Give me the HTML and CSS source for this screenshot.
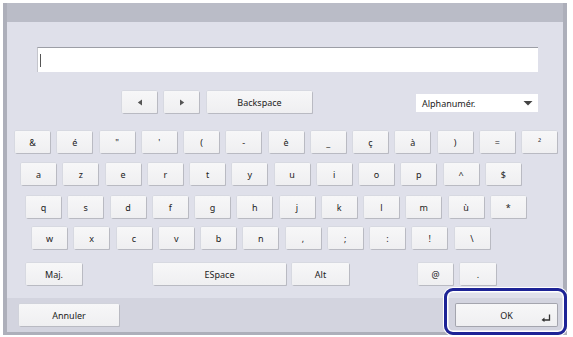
FILE: index.html
```
<!DOCTYPE html>
<html lang="fr">
<head>
<meta charset="UTF-8">
<meta name="viewport" content="width=device-width, initial-scale=1.0">
<title>Clavier</title>
<link rel="stylesheet" href="styles.css">
</head>
<body>

<div class="frame">
    <div class="title-bar"></div>

    <div class="panel">
        <div class="text-field"><span class="caret"></span></div>

        <div class="nav-row">
            <button class="key arrow-key"><svg width="6" height="7" viewBox="0 0 6 7"><path d="M5 0.5 L0.8 3.5 L5 6.5 Z" fill="#555"/></svg></button>
            <button class="key arrow-key"><svg width="6" height="7" viewBox="0 0 6 7"><path d="M1 0.5 L5.2 3.5 L1 6.5 Z" fill="#555"/></svg></button>
            <button class="key backspace-key">Backspace</button>
            <div class="mode-select">
                <span>Alphanumér.</span>
                <svg width="10" height="5" viewBox="0 0 10 5"><path d="M0.5 0 H9.5 L5 4.5 Z" fill="#444"/></svg>
            </div>
        </div>

        <div class="keyboard">
            <div class="key-row row-1">
                <button class="key">&amp;</button>
                <button class="key">é</button>
                <button class="key">"</button>
                <button class="key">'</button>
                <button class="key">(</button>
                <button class="key">-</button>
                <button class="key">è</button>
                <button class="key">_</button>
                <button class="key">ç</button>
                <button class="key">à</button>
                <button class="key">)</button>
                <button class="key">=</button>
                <button class="key">²</button>
            </div>
            <div class="key-row row-2">
                <button class="key">a</button>
                <button class="key">z</button>
                <button class="key">e</button>
                <button class="key">r</button>
                <button class="key">t</button>
                <button class="key">y</button>
                <button class="key">u</button>
                <button class="key">i</button>
                <button class="key">o</button>
                <button class="key">p</button>
                <button class="key">^</button>
                <button class="key">$</button>
            </div>
            <div class="key-row row-3">
                <button class="key">q</button>
                <button class="key">s</button>
                <button class="key">d</button>
                <button class="key">f</button>
                <button class="key">g</button>
                <button class="key">h</button>
                <button class="key">j</button>
                <button class="key">k</button>
                <button class="key">l</button>
                <button class="key">m</button>
                <button class="key">ù</button>
                <button class="key">*</button>
            </div>
            <div class="key-row row-4">
                <button class="key">w</button>
                <button class="key">x</button>
                <button class="key">c</button>
                <button class="key">v</button>
                <button class="key">b</button>
                <button class="key">n</button>
                <button class="key">,</button>
                <button class="key">;</button>
                <button class="key">:</button>
                <button class="key">!</button>
                <button class="key">\</button>
            </div>
            <div class="key-row row-5">
                <button class="key shift-key">Maj.</button>
                <button class="key space-key">ESpace</button>
                <button class="key alt-key">Alt</button>
                <button class="key at-key">@</button>
                <button class="key dot-key">.</button>
            </div>
        </div>
    </div>

    <div class="action-bar">
        <button class="key action-button">Annuler</button>
        <button class="key action-button ok-button">
            OK
            <svg class="enter-icon" width="10" height="8" viewBox="0 0 10 8"><path d="M8.5 0.5 V6 H3" stroke="#333" stroke-width="1.3" fill="none"/><path d="M0.5 6 L3.5 3.5 V8 Z" fill="#333"/></svg>
        </button>
    </div>
</div>

</body>
</html>
```

FILE: styles.css
```
body {
    margin: 0;
    background-color: #fff;
    font-family: "Noto Sans", "Open Sans", sans-serif;
    color: #222;
}
.frame {
    margin: 3px 0 0 3px;
    width: 564px;
    border-left: 4px solid #adafba;
    border-right: 4px solid #adafba;
    border-bottom: 3px solid #adafba;
    box-sizing: border-box;
}
.title-bar {
    height: 19px;
    background-color: #babcc7;
}
.panel {
    background-color: #dfe0ea;
    height: 276px;
    padding-top: 25px;
    box-sizing: border-box;
}
.text-field {
    margin-left: 30px;
    width: 501px;
    height: 25px;
    background-color: #fff;
    border-top: 1px solid #9c9ea6;
    border-left: 1px solid #c4c5cc;
    box-sizing: border-box;
    display: flex;
    align-items: center;
    padding-left: 2px;
}
.caret {
    width: 1px;
    height: 13px;
    background-color: #555;
}

/* Buttons */
.key {
    width: 35px;
    height: 22px;
    padding: 0;
    border: none;
    border-radius: 1px;
    background: linear-gradient(#f7f7f8, #efeff1);
    box-shadow: 1px 1px 0 #b9bac2, 0 0 0 0.5px #d0d1d8;
    font-family: inherit;
    font-size: 9px;
    color: #222;
    flex: none;
    cursor: pointer;
}
.nav-row {
    display: flex;
    margin-top: 19px;
    padding-left: 115px;
    padding-right: 25px;
}
.arrow-key {
    margin-right: 7px;
}
.arrow-key svg {
    display: block;
    margin: 0 auto;
}
.backspace-key {
    width: 105px;
    margin-left: 1px;
}
.mode-select {
    margin-left: auto;
    margin-top: 3px;
    width: 122px;
    height: 18px;
    background-color: #fff;
    display: flex;
    align-items: center;
    justify-content: space-between;
    padding: 0 5px 0 6px;
    box-sizing: border-box;
    font-size: 9px;
}

/* Keyboard */
.key-row {
    display: flex;
    gap: 7.25px;
}
.row-1 { margin-top: 18px; padding-left: 8px; }
.row-2 { margin-top: 10px; padding-left: 14px; }
.row-3 { margin-top: 11px; padding-left: 19px; }
.row-4 { margin-top: 9px; padding-left: 25px; }
.row-5 { margin-top: 14px; padding-left: 19px; gap: 0; }
.shift-key { width: 56px; }
.space-key { width: 133px; margin-left: 71px; }
.alt-key { width: 57px; margin-left: 6px; }
.at-key { margin-left: 69px; }
.dot-key { width: 36px; margin-left: 7px; }

/* Bottom bar */
.action-bar {
    height: 34px;
    background-color: #d3d4df;
    display: flex;
    justify-content: space-between;
    padding: 6px 6px 0 12px;
    box-sizing: border-box;
}
.action-button {
    width: 100px;
}
.ok-button {
    width: 101px;
    position: relative;
    box-shadow: 0 0 0 1px #a4a5ae;
}
.ok-button::after {
    content: "";
    position: absolute;
    top: -16px;
    left: -12px;
    right: -10px;
    bottom: -9px;
    border: 3px solid #1d2396;
    border-radius: 9px;
    box-shadow: inset 0 0 0 1.5px #fff, 0 0 0 1px #fff;
}
.enter-icon {
    position: absolute;
    right: 6px;
    bottom: 4px;
}
```
